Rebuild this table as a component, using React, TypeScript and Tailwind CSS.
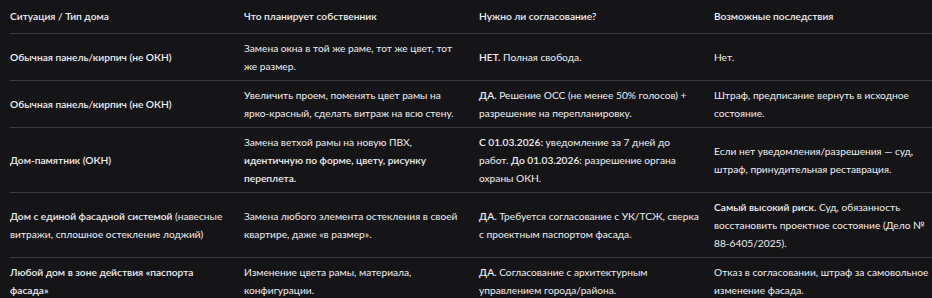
import React from 'react';

type Cell = React.ReactNode;

const B = ({ children }: { children: React.ReactNode }) => <b className="font-semibold">{children}</b>;

const headers = ['Ситуация / Тип дома', 'Что планирует собственник', 'Нужно ли согласование?', 'Возможные последствия'];

const rows: Cell[][] = [
  [
    <B>Обычная панель/кирпич (не ОКН)</B>,
    'Замена окна в той же раме, тот же цвет, тот же размер.',
    <>
      <B>НЕТ.</B> Полная свобода.
    </>,
    'Нет.',
  ],
  [
    <B>Обычная панель/кирпич (не ОКН)</B>,
    'Увеличить проем, поменять цвет рамы на ярко-красный, сделать витраж на всю стену.',
    <>
      <B>ДА.</B> Решение ОСС (не менее 50% голосов) + разрешение на перепланировку.
    </>,
    'Штраф, предписание вернуть в исходное состояние.',
  ],
  [
    <B>Дом-памятник (ОКН)</B>,
    <>
      Замена ветхой рамы на новую ПВХ, <B>идентичную по форме, цвету, рисунку переплета.</B>
    </>,
    <>
      <B>С 01.03.2026:</B> уведомление за 7 дней до работ. <B>До 01.03.2026:</B> разрешение органа охраны ОКН.
    </>,
    'Если нет уведомления/разрешения — суд, штраф, принудительная реставрация.',
  ],
  [
    <>
      <B>Дом с единой фасадной системой</B> (навесные витражи, сплошное остекление лоджий)
    </>,
    'Замена любого элемента остекления в своей квартире, даже «в размер».',
    <>
      <B>ДА.</B> Требуется согласование с УК/ТСЖ, сверка с проектным паспортом фасада.
    </>,
    <>
      <B>Самый высокий риск.</B> Суд, обязанность восстановить проектное состояние (Дело № 88-6405/2025).
    </>,
  ],
  [
    <B>Любой дом в зоне действия «паспорта фасада»</B>,
    'Изменение цвета рамы, материала, конфигурации.',
    <>
      <B>ДА.</B> Согласование с архитектурным управлением города/района.
    </>,
    'Отказ в согласовании, штраф за самовольное изменение фасада.',
  ],
];

// content widths per column
const widths = ['w-[218px]', 'w-[218px]', 'w-[222px]', 'w-[229px]'];

export default function App() {
  return (
    <div
      className="w-[932px] h-[298px] overflow-hidden bg-[#151518] text-[#efefef] pl-[10px]"
      style={{ fontFamily: 'Lato, "Open Sans", sans-serif' }}
    >
      <table className="table-fixed border-collapse w-[933px] text-[10.2px] leading-[18px]">
        <colgroup>
          <col className="w-[234px]" />
          <col className="w-[235px]" />
          <col className="w-[235px]" />
          <col className="w-[229px]" />
        </colgroup>
        <thead>
          <tr className="border-b border-[#3a3a3e]">
            {headers.map((h) => (
              <th key={h} className="h-[33px] p-0 text-left align-middle font-semibold">
                {h}
              </th>
            ))}
          </tr>
        </thead>
        <tbody>
          {rows.map((r, i) => (
            <tr key={i} className="border-b border-[#3a3a3e]">
              {r.map((c, j) => (
                <td key={j} className="p-0 py-[5px] align-middle">
                  <div className={widths[j]}>{c}</div>
                </td>
              ))}
            </tr>
          ))}
        </tbody>
      </table>
    </div>
  );
}
